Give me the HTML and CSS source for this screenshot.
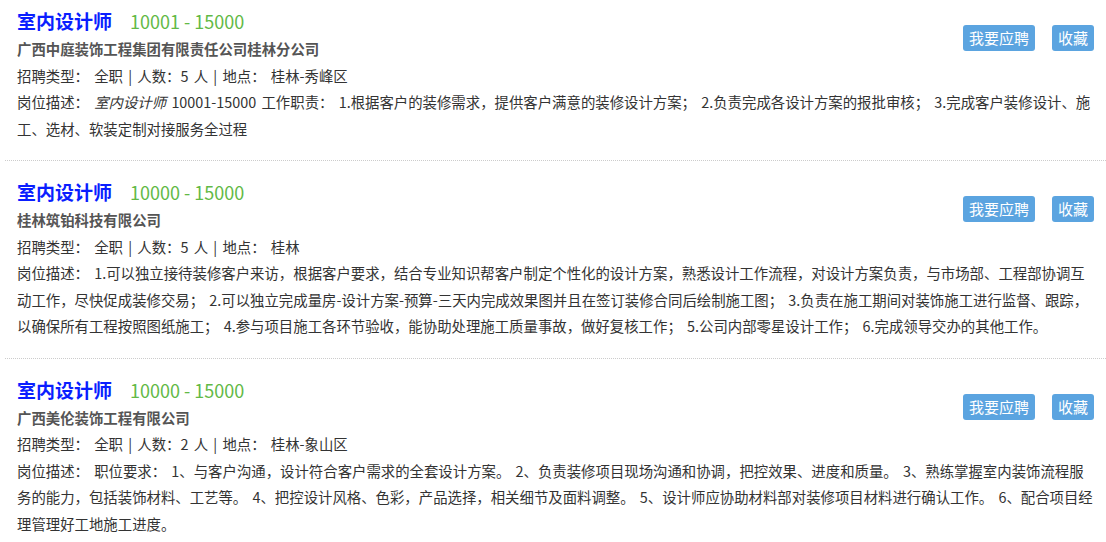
FILE: index.html
```html
<!DOCTYPE html>
<html lang="zh-CN">
<head>
  <meta charset="UTF-8" />
  <meta name="viewport" content="width=device-width, initial-scale=1.0"/>
  <title>招聘信息</title>
  <link rel="stylesheet" href="styles.css">
</head>
<body>
  <div class="job-list">

    <div class="job">
      <div class="job-head">
        <div class="job-main">
          <h2 class="job-title">室内设计师<span class="salary">10001 - 15000</span></h2>
          <p class="company">广西中庭装饰工程集团有限责任公司桂林分公司</p>
        </div>
        <div class="actions">
          <button class="btn">我要应聘</button>
          <button class="btn">收藏</button>
        </div>
      </div>
      <p class="meta">招聘类型： 全职 | 人数：5 人 | 地点： 桂林-秀峰区</p>
      <p class="desc">岗位描述： <em>室内设计师</em> 10001-15000 工作职责： 1.根据客户的装修需求，提供客户满意的装修设计方案； 2.负责完成各设计方案的报批审核； 3.完成客户装修设计、施工、选材、软装定制对接服务全过程</p>
    </div>

    <div class="job">
      <div class="job-head">
        <div class="job-main">
          <h2 class="job-title">室内设计师<span class="salary">10000 - 15000</span></h2>
          <p class="company">桂林筑铂科技有限公司</p>
        </div>
        <div class="actions">
          <button class="btn">我要应聘</button>
          <button class="btn">收藏</button>
        </div>
      </div>
      <p class="meta">招聘类型： 全职 | 人数：5 人 | 地点： 桂林</p>
      <p class="desc">岗位描述： 1.可以独立接待装修客户来访，根据客户要求，结合专业知识帮客户制定个性化的设计方案，熟悉设计工作流程，对设计方案负责，与市场部、工程部协调互动工作，尽快促成装修交易； 2.可以独立完成量房-设计方案-预算-三天内完成效果图并且在签订装修合同后绘制施工图； 3.负责在施工期间对装饰施工进行监督、跟踪，以确保所有工程按照图纸施工； 4.参与项目施工各环节验收，能协助处理施工质量事故，做好复核工作； 5.公司内部零星设计工作； 6.完成领导交办的其他工作。</p>
    </div>

    <div class="job">
      <div class="job-head">
        <div class="job-main">
          <h2 class="job-title">室内设计师<span class="salary">10000 - 15000</span></h2>
          <p class="company">广西美伦装饰工程有限公司</p>
        </div>
        <div class="actions">
          <button class="btn">我要应聘</button>
          <button class="btn">收藏</button>
        </div>
      </div>
      <p class="meta">招聘类型： 全职 | 人数：2 人 | 地点： 桂林-象山区</p>
      <p class="desc">岗位描述： 职位要求： 1、与客户沟通，设计符合客户需求的全套设计方案。 2、负责装修项目现场沟通和协调，把控效果、进度和质量。 3、熟练掌握室内装饰流程服务的能力，包括装饰材料、工艺等。 4、把控设计风格、色彩，产品选择，相关细节及面料调整。 5、设计师应协助材料部对装修项目材料进行确认工作。 6、配合项目经理管理好工地施工进度。</p>
    </div>

  </div>
</body>
</html>
```

FILE: styles.css
```css
body {
  margin: 0;
  font-family: "Noto Sans CJK SC", "Noto Sans", sans-serif;
  font-size: 14.4px;
  color: #333;
  background: #fff;
}

.job {
  margin-left: 5px;
  padding: 16px 12px 18px 12px;
  border-bottom: 1px dotted #ccc;
}

.job:first-child {
  padding-top: 6px;
}

.job-head {
  display: flex;
  justify-content: space-between;
  align-items: flex-start;
}

.job-title {
  margin: 0;
  font-size: 19px;
  line-height: 30px;
  font-weight: bold;
  color: #0a1eff;
}

.salary {
  margin-left: 18px;
  font-size: 18px;
  font-weight: normal;
  color: #62b946;
}

.company {
  margin: 0;
  line-height: 26.5px;
  font-weight: bold;
  color: #555;
}

.actions {
  display: flex;
  gap: 17px;
  margin-top: 19px;
}

.btn {
  height: 26px;
  padding: 0 6px;
  border: none;
  border-radius: 3px;
  background: #5ba4e0;
  color: #fff;
  font-family: inherit;
  font-size: 15px;
  line-height: 26px;
  cursor: pointer;
}

.meta,
.desc {
  margin: 0;
  line-height: 26.5px;
  word-spacing: 2px;
}

.desc em {
  font-style: italic;
}
```
